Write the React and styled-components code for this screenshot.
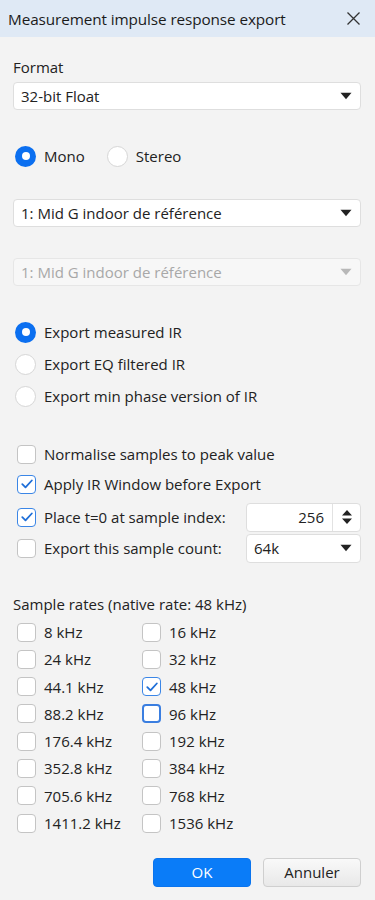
import React from "react";
import styled, { createGlobalStyle } from "styled-components";

const Global = createGlobalStyle`
  html, body { margin: 0; padding: 0; }
  body {
    background: #f3f3f3;
    font-family: "Open Sans", "Noto Sans", sans-serif;
    color: #222;
  }
`;

const FS = 15;

const Window = styled.div`
  width: 375px;
  height: 900px;
  background: #f3f3f3;
  display: flex;
  flex-direction: column;
  overflow: hidden;
`;

const TitleBar = styled.div`
  height: 37px;
  background: #dfe9f5;
  display: flex;
  align-items: center;
  justify-content: space-between;
  padding: 0 14px 0 8px;
  flex-shrink: 0;
`;

const Title = styled.div`
  font-size: 15.3px;
  color: #1b1b1b;
  letter-spacing: -0.1px;
`;

const Close = styled.div`
  width: 16px;
  height: 16px;
  display: flex;
  align-items: center;
  justify-content: center;
`;

const Body = styled.div`
  padding: 0 14px 0 13px;
  display: flex;
  flex-direction: column;
`;

const Label = styled.div`
  font-size: ${FS}px;
  height: 20px;
  line-height: 20px;
  margin-top: ${(p) => p.$mt || 0}px;
  color: #222;
`;

const SelectBox = styled.div`
  height: ${(p) => p.$h || 28}px;
  box-sizing: border-box;
  background: ${(p) => (p.$disabled ? "#f7f7f7" : "#fff")};
  border: 1px solid ${(p) => (p.$disabled ? "#e6e6e6" : "#dedede")};
  border-radius: 4px;
  display: flex;
  align-items: center;
  justify-content: space-between;
  padding: 0 8px 0 7px;
  font-size: ${FS}px;
  color: ${(p) => (p.$disabled ? "#a8a8a8" : "#222")};
  margin-top: ${(p) => p.$mt || 0}px;
  width: ${(p) => p.$w || "auto"};
  flex-shrink: 0;
`;

const Arrow = ({ color = "#222" }) => (
  <svg width="12" height="8" viewBox="0 0 12 8">
    <path d="M0.5 0.8 L11.5 0.8 L6 7.2 Z" fill={color} />
  </svg>
);

const RadioRowInline = styled.div`
  display: flex;
  align-items: center;
  margin-top: ${(p) => p.$mt || 0}px;
  height: 21px;
`;

const Option = styled.div`
  display: flex;
  align-items: center;
  height: ${(p) => p.$h || 20}px;
  margin-top: ${(p) => p.$mt || 0}px;
  margin-right: ${(p) => p.$mr || 0}px;
  font-size: ${FS}px;
  color: #222;
  white-space: nowrap;
`;

const RadioCircle = styled.span`
  box-sizing: border-box;
  width: 21px;
  height: 21px;
  border-radius: 50%;
  margin-left: 2px;
  margin-right: 8px;
  flex-shrink: 0;
  background: ${(p) => (p.$on ? "#0b6ff0" : "#fff")};
  border: ${(p) => (p.$on ? "none" : "1px solid #d6d6d6")};
  display: flex;
  align-items: center;
  justify-content: center;
  &::after {
    content: "";
    display: ${(p) => (p.$on ? "block" : "none")};
    width: 8px;
    height: 8px;
    border-radius: 50%;
    background: #fff;
  }
`;

const CheckSquare = styled.span`
  box-sizing: border-box;
  width: 19px;
  height: 19px;
  border-radius: 4px;
  margin-left: 4px;
  margin-right: 8px;
  flex-shrink: 0;
  background: #fff;
  border: ${(p) =>
    p.$focus ? "2px solid #3a7ee0" : p.$on ? "1.5px solid #3b86e6" : "1px solid #c4c4c4"};
  display: flex;
  align-items: center;
  justify-content: center;
`;

const Radio = ({ on, children, ...rest }) => (
  <Option $h={21} {...rest}>
    <RadioCircle $on={on} />
    {children}
  </Option>
);

const Check = ({ on, focus, children, ...rest }) => (
  <Option {...rest}>
    <CheckSquare $on={on} $focus={focus}>
      {on && (
        <svg width="12" height="10" viewBox="0 0 12 10">
          <path d="M1.3 5.2 L4.5 8.3 L10.8 1.5" fill="none" stroke="#1f6fd8" strokeWidth="1.8" strokeLinecap="round" strokeLinejoin="round" />
        </svg>
      )}
    </CheckSquare>
    {children}
  </Option>
);

const Stack = styled.div`
  display: flex;
  flex-direction: column;
  gap: ${(p) => p.$gap || 0}px;
  margin-top: ${(p) => p.$mt || 0}px;
`;

const FieldRow = styled.div`
  display: flex;
  align-items: center;
  justify-content: space-between;
  height: ${(p) => p.$h}px;
  margin-top: ${(p) => p.$mt || 0}px;
`;

const SpinBox = styled.div`
  width: 115px;
  height: 29px;
  box-sizing: border-box;
  background: #fff;
  border: 1px solid #dedede;
  border-radius: 4px;
  display: flex;
  align-items: stretch;
  font-size: ${FS}px;
`;

const SpinValue = styled.div`
  flex: 1;
  display: flex;
  align-items: center;
  justify-content: flex-end;
  padding-right: 8px;
  border-right: 1px solid #e2e2e2;
`;

const SpinArrows = styled.div`
  width: 27px;
  display: flex;
  align-items: center;
  justify-content: center;
`;

const RateGrid = styled.div`
  display: grid;
  grid-template-columns: 125px 1fr;
  grid-auto-rows: 27.3px;
  margin-top: 4.5px;
`;

const Footer = styled.div`
  display: flex;
  justify-content: flex-end;
  gap: 12px;
  margin-top: 21px;
`;

const Button = styled.button`
  width: 98px;
  height: 29px;
  box-sizing: border-box;
  border-radius: 4px;
  font-family: inherit;
  font-size: ${FS}px;
  padding: 0;
  cursor: pointer;
  ${(p) =>
    p.$primary
      ? `background: #0a7cf8; color: #fff; border: 1px solid #0a74ee;`
      : `background: linear-gradient(#f9f9f9, #e8e8e8); color: #222; border: 1px solid #cfcfcf;`}
`;

const rates = [
  ["8 kHz", "16 kHz"],
  ["24 kHz", "32 kHz"],
  ["44.1 kHz", "48 kHz"],
  ["88.2 kHz", "96 kHz"],
  ["176.4 kHz", "192 kHz"],
  ["352.8 kHz", "384 kHz"],
  ["705.6 kHz", "768 kHz"],
  ["1411.2 kHz", "1536 kHz"],
];

export default function App() {
  return (
    <Window>
      <Global />
      <TitleBar>
        <Title>Measurement impulse response export</Title>
        <Close>
          <svg width="15" height="15" viewBox="0 0 15 15">
            <path d="M1.5 1.5 L13.5 13.5 M13.5 1.5 L1.5 13.5" stroke="#333" strokeWidth="1.3" />
          </svg>
        </Close>
      </TitleBar>
      <Body>
        <Label $mt={20}>Format</Label>
        <SelectBox $mt={5}>
          <span>32-bit Float</span>
          <Arrow />
        </SelectBox>

        <RadioRowInline $mt={35.5}>
          <Radio on $mr={20}>Mono</Radio>
          <Radio>Stereo</Radio>
        </RadioRowInline>

        <SelectBox $mt={32.5}>
          <span>1: Mid G indoor de référence</span>
          <Arrow />
        </SelectBox>
        <SelectBox $mt={31} $disabled>
          <span>1: Mid G indoor de référence</span>
          <Arrow color="#b8b8b8" />
        </SelectBox>

        <Stack $mt={35.5} $gap={11}>
          <Radio on>Export measured IR</Radio>
          <Radio>Export EQ filtered IR</Radio>
          <Radio>Export min phase version of IR</Radio>
        </Stack>

        <Check $mt={37.5}>Normalise samples to peak value</Check>
        <Check on $mt={10}>Apply IR Window before Export</Check>
        <FieldRow $h={29} $mt={8.5}>
          <Check on>Place t=0 at sample index:</Check>
          <SpinBox>
            <SpinValue>256</SpinValue>
            <SpinArrows>
              <svg width="12" height="16" viewBox="0 0 12 16">
                <path d="M1 6.5 L6 1 L11 6.5 Z M1 9.5 L11 9.5 L6 15 Z" fill="#222" />
              </svg>
            </SpinArrows>
          </SpinBox>
        </FieldRow>
        <FieldRow $h={29} $mt={2}>
          <Check>Export this sample count:</Check>
          <SelectBox $w="115px" $h={29}>
            <span>64k</span>
            <Arrow />
          </SelectBox>
        </FieldRow>

        <Label $mt={31.5}>Sample rates (native rate: 48 kHz)</Label>
        <RateGrid>
          {rates.map(([a, b]) => (
            <React.Fragment key={a}>
              <Check $h={27}>{a}</Check>
              <Check $h={27} on={b === "48 kHz"} focus={b === "96 kHz"}>
                {b}
              </Check>
            </React.Fragment>
          ))}
        </RateGrid>

        <Footer>
          <Button $primary>OK</Button>
          <Button>Annuler</Button>
        </Footer>
      </Body>
    </Window>
  );
}
